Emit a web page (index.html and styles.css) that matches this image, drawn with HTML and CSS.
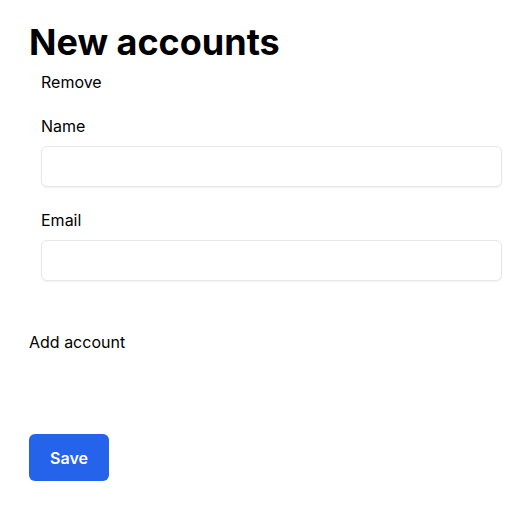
FILE: index.html
```html
<!DOCTYPE html>
<html>
<head>
<meta charset="utf-8">
<link rel="stylesheet" href="styles.css">
</head>
<body>
<main class="page">
  <h1 class="title">New accounts</h1>
  <div class="account">
    <button class="link-btn remove">Remove</button>
    <div class="field">
      <label class="label">Name</label>
      <input class="input" type="text">
    </div>
    <div class="field">
      <label class="label">Email</label>
      <input class="input" type="email">
    </div>
  </div>
  <button class="link-btn add">Add account</button>
  <button class="save">Save</button>
</main>
</body>
</html>
```
FILE: styles.css
```css
* { box-sizing: border-box; }
body {
  margin: 0;
  font-family: Inter, "Noto Sans", sans-serif;
  color: #000;
  background: #fff;
}
.page {
  padding: 20px 29px 0 29px;
  display: flex;
  flex-direction: column;
  align-items: flex-start;
}
.title {
  margin: 0;
  font-size: 36px;
  font-weight: 700;
  line-height: 44px;
  letter-spacing: 0;
}
.account {
  align-self: stretch;
  padding-left: 12px;
  display: flex;
  flex-direction: column;
  align-items: flex-start;
}
.link-btn {
  background: none;
  border: 0;
  padding: 0;
  font: inherit;
  font-size: 16px;
  line-height: 20px;
  color: #000;
}
.remove { margin-top: 8px; }
.field {
  align-self: stretch;
  display: flex;
  flex-direction: column;
  gap: 10px;
  margin-top: 24px;
}
.field + .field { margin-top: 23px; }
.label {
  font-size: 16px;
  line-height: 20px;
}
.input {
  width: 100%;
  height: 41px;
  border: 1px solid #e5e7eb;
  border-radius: 6px;
  box-shadow: 0 1px 2px rgba(0,0,0,0.06);
  background: #fff;
}
.add { margin-top: 51px; }
.save {
  margin-top: 82px;
  width: 80px;
  height: 47px;
  background: #2563eb;
  color: #fff;
  border: 0;
  border-radius: 6px;
  font: inherit;
  font-size: 16px;
  font-weight: 600;
}
```
